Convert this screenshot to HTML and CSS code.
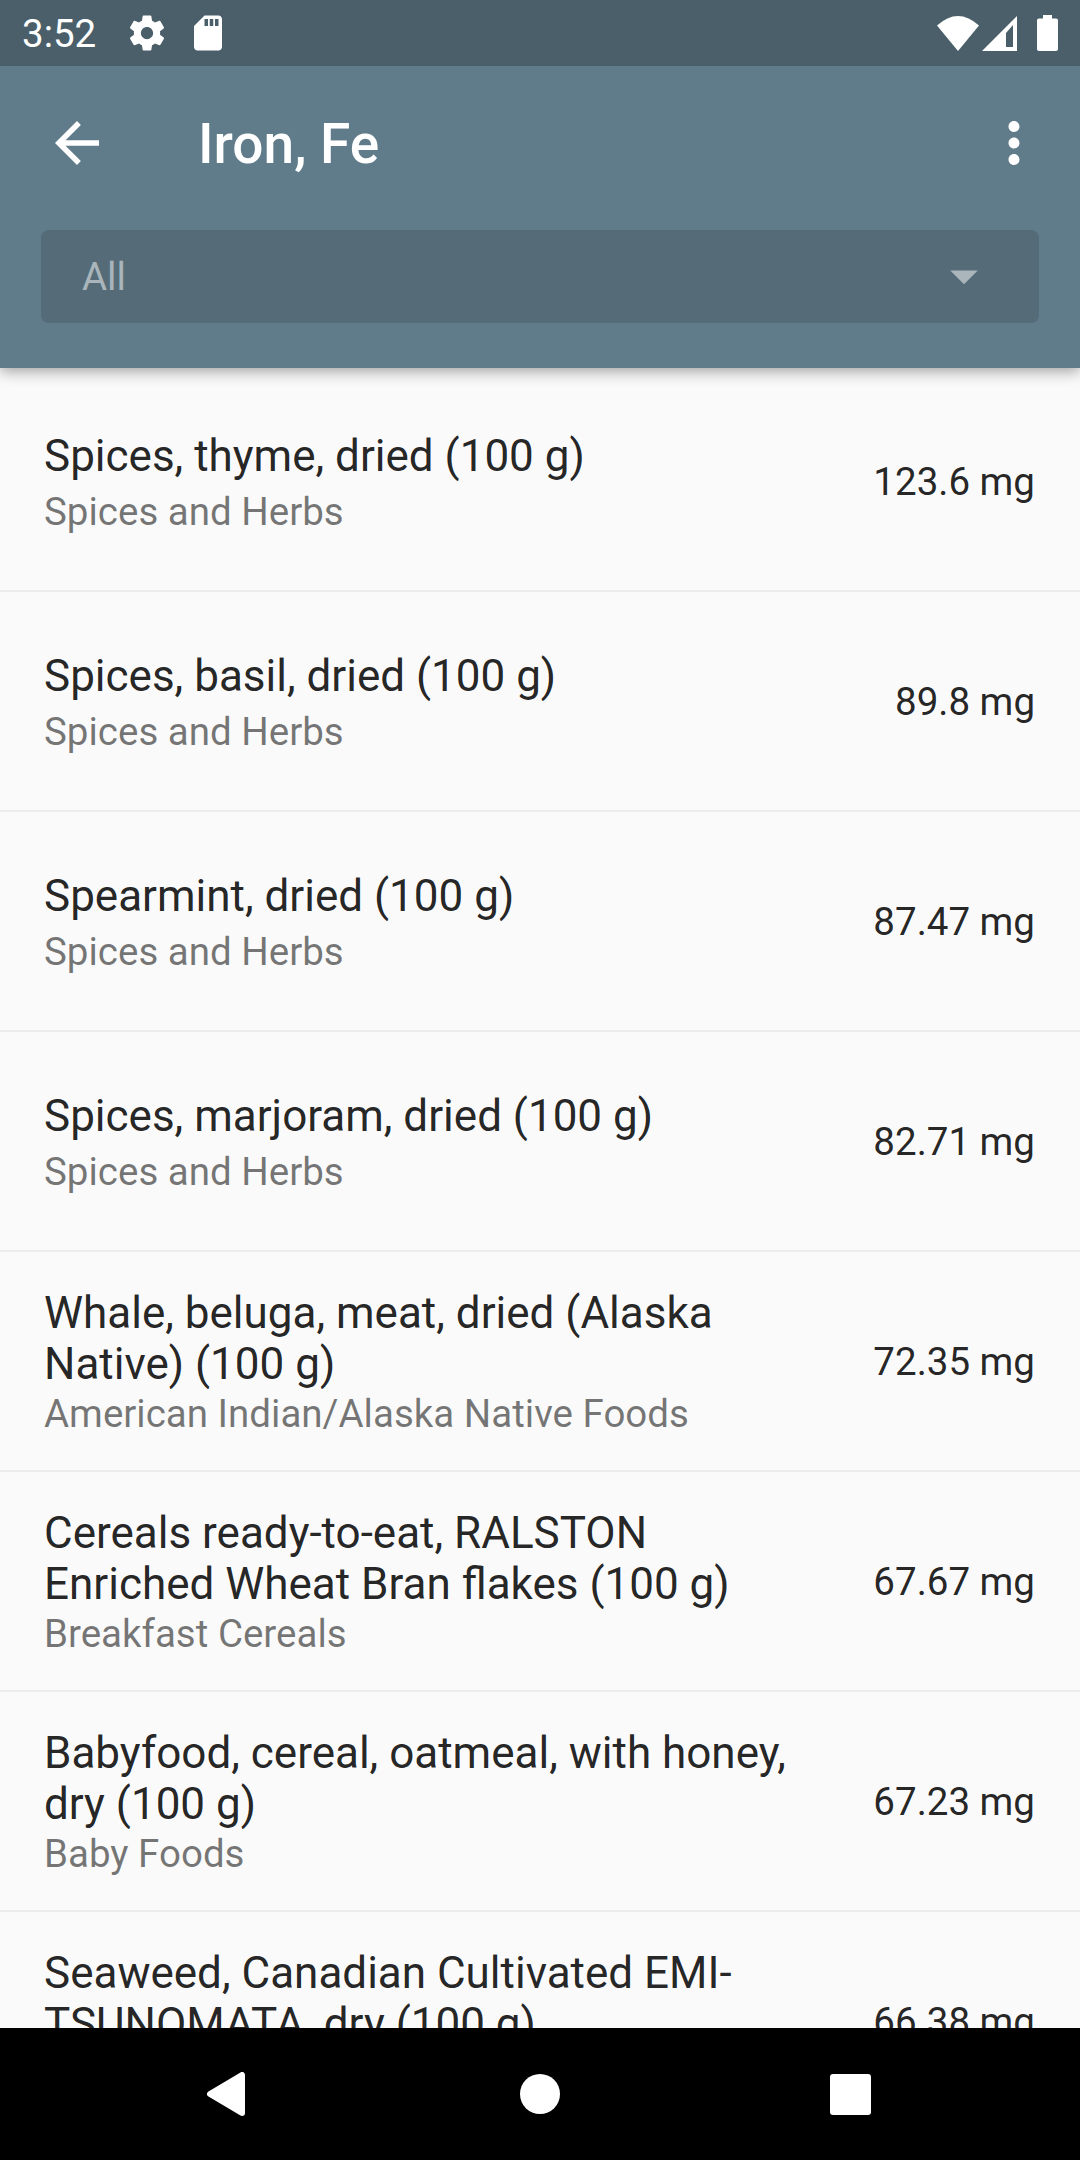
FILE: index.html
```html
<!DOCTYPE html>
<html lang="en">
<head>
<meta charset="utf-8">
<title>Iron, Fe</title>
<link rel="stylesheet" href="styles.css">
</head>
<body>
<div class="screen">
  <header class="appbar">
    <div class="statusbar">
      <span class="clock">3:52</span>
      <svg class="st-gear" viewBox="0 0 24 24"><path d="M19.43 12.98c.04-.32.07-.64.07-.98s-.03-.66-.07-.98l2.11-1.65c.19-.15.24-.42.12-.64l-2-3.46c-.12-.22-.39-.3-.61-.22l-2.49 1c-.52-.4-1.08-.73-1.69-.98l-.38-2.65C14.46 2.18 14.25 2 14 2h-4c-.25 0-.46.18-.49.42l-.38 2.65c-.61.25-1.17.59-1.69.98l-2.49-1c-.23-.09-.49 0-.61.22l-2 3.46c-.13.22-.07.49.12.64l2.11 1.65c-.04.32-.07.65-.07.98s.03.66.07.98l-2.11 1.65c-.19.15-.24.42-.12.64l2 3.46c.12.22.39.3.61.22l2.49-1c.52.4 1.08.73 1.69.98l.38 2.65c.03.24.24.42.49.42h4c.25 0 .46-.18.49-.42l.38-2.65c.61-.25 1.17-.59 1.69-.98l2.49 1c.23.09.49 0 .61-.22l2-3.46c.12-.22.07-.49-.12-.64l-2.11-1.65zM12 15.5c-1.93 0-3.5-1.57-3.5-3.5s1.57-3.5 3.5-3.5 3.5 1.57 3.5 3.5-1.57 3.5-3.5 3.5z"/></svg>
      <svg class="st-sd" viewBox="0 0 24 24"><path d="M18 2h-8L4.02 8 4 20c0 1.1.9 2 2 2h12c1.1 0 2-.9 2-2V4c0-1.100-.9-2-2-2zm-6 6h-2V4h2v4zm3 0h-2V4h2v4zm3 0h-2V4h2v4z"/></svg>
      <span class="spacer"></span>
      <svg class="st-wifi" viewBox="0 0 42 35"><path d="M21 35L0 9.500Q21-9.500 42 9.500Z"/></svg>
      <svg class="st-signal" viewBox="0 0 35 35"><path fill-rule="evenodd" d="M0 35L35 0V35ZM24 31H31V9L24 17Z"/></svg>
      <svg class="st-battery" viewBox="0 0 21 36"><path d="M6 0H15V3.500H19C20.200 3.500 21 4.300 21 5.500V34C21 35.200 20.200 36 19 36H2C.8 36 0 35.200 0 34V5.500C0 4.300 .8 3.500 2 3.500H6Z"/></svg>
    </div>
    <div class="toolbar">
      <svg class="tb-icon" viewBox="0 0 24 24"><path d="M20 11H7.830l5.590-5.590L12 4l-8 8 8 8 1.410-1.410L7.830 13H20v-2z"/></svg>
      <h1 class="tb-title">Iron, Fe</h1>
      <svg class="tb-icon" viewBox="0 0 24 24"><path d="M12 8c1.100 0 2-.9 2-2s-.9-2-2-2-2 .9-2 2 .9 2 2 2zm0 2c-1.100 0-2 .9-2 2s.9 2 2 2 2-.9 2-2-.9-2-2-2zm0 6c-1.100 0-2 .9-2 2s.9 2 2 2 2-.9 2-2-.9-2-2-2z"/></svg>
    </div>
    <div class="filter">
      <span class="filter-label">All</span>
      <svg class="filter-arrow" viewBox="0 0 24 24"><path d="M7 10l5 5 5-5z"/></svg>
    </div>
  </header>

  <main class="list">
    <div class="row"><div class="info"><div class="name">Spices, thyme, dried (100 g)</div><div class="group">Spices and Herbs</div></div><div class="amount">123.6 mg</div></div>
    <div class="row"><div class="info"><div class="name">Spices, basil, dried (100 g)</div><div class="group">Spices and Herbs</div></div><div class="amount">89.8 mg</div></div>
    <div class="row"><div class="info"><div class="name">Spearmint, dried (100 g)</div><div class="group">Spices and Herbs</div></div><div class="amount">87.47 mg</div></div>
    <div class="row"><div class="info"><div class="name">Spices, marjoram, dried (100 g)</div><div class="group">Spices and Herbs</div></div><div class="amount">82.71 mg</div></div>
    <div class="row"><div class="info"><div class="name">Whale, beluga, meat, dried (Alaska Native) (100 g)</div><div class="group">American Indian/Alaska Native Foods</div></div><div class="amount">72.35 mg</div></div>
    <div class="row"><div class="info"><div class="name">Cereals ready-to-eat, RALSTON Enriched Wheat Bran flakes (100 g)</div><div class="group">Breakfast Cereals</div></div><div class="amount">67.67 mg</div></div>
    <div class="row"><div class="info"><div class="name">Babyfood, cereal, oatmeal, with honey, dry (100 g)</div><div class="group">Baby Foods</div></div><div class="amount">67.23 mg</div></div>
    <div class="row"><div class="info"><div class="name">Seaweed, Canadian Cultivated EMI-TSUNOMATA, dry (100 g)</div><div class="group">Vegetables and Vegetable Products</div></div><div class="amount">66.38 mg</div></div>
  </main>

  <nav class="navbar">
    <svg class="nav-back" viewBox="0 0 38 44"><path d="M35 3V41L3 22Z"/></svg>
    <span class="nav-home"></span>
    <span class="nav-recent"></span>
  </nav>
</div>
</body>
</html>
```
FILE: styles.css
```css
* { box-sizing: border-box; }
html, body { margin: 0; padding: 0; }
body { font-family: Roboto, "Noto Sans", sans-serif; background: #fafafa; }

.screen { width: 1080px; height: 2160px; display: flex; flex-direction: column; overflow: hidden; }

.appbar { flex: none; position: relative; z-index: 2; background: #607b89; box-shadow: 0 3px 14px rgba(0,0,0,.38); padding-bottom: 45px; }

.statusbar { height: 66px; background: #4a5f6a; display: flex; align-items: center; padding: 0 22px; color: #fff; }
.statusbar svg { fill: #fff; flex: none; display: block; }
.clock { font-size: 38.5px; width: 103.500px; }
.st-gear { width: 42px; height: 42px; }
.st-sd { width: 42px; height: 42px; margin-left: 19px; }
.spacer { flex: 1; }
.st-wifi { width: 42px; height: 35px; }
.st-signal { width: 35px; height: 35px; margin-left: 3px; }
.st-battery { width: 21px; height: 36px; margin-left: 20px; }

.toolbar { height: 154px; margin-bottom: 9.500px; display: flex; align-items: center; padding: 0 33px 0 44px; color: #fff; }
.tb-icon { width: 66px; height: 66px; fill: #fff; flex: none; }
.tb-title { margin: 2px 0 0 88px; flex: 1; font-size: 55px; font-weight: 500; }

.filter { margin: 0 41px; height: 93.500px; background: #556c78; border-radius: 8px; display: flex; align-items: center; justify-content: space-between; padding: 0 42px 0 41px; }
.filter-label { font-size: 38.5px; color: rgba(255,255,255,.5); }
.filter-arrow { width: 66px; height: 66px; fill: rgba(255,255,255,.5); }

.list { flex: 1; min-height: 0; overflow: hidden; padding-top: 4px; background: #fafafa; }
.row { height: 220px; flex: none; display: flex; align-items: center; gap: 66px; padding: 0 45px 0 44px; border-bottom: 2px solid #ececec; }
.info { flex: 1; min-width: 0; padding-top: 3px; }
.name { font-size: 44px; line-height: 51px; min-height: 57px; color: rgba(0,0,0,.87); }
.group { font-size: 38.5px; line-height: 47px; color: rgba(0,0,0,.54); }
.amount { flex: none; font-size: 38.5px; color: rgba(0,0,0,.87); }

.navbar { flex: none; height: 132px; background: #000; position: relative; z-index: 3; display: flex; align-items: center; justify-content: center; gap: 270px; padding-right: 2px; }
.nav-back { width: 38px; height: 44px; margin-right: 5px; fill: #fff; stroke: #fff; stroke-width: 6px; stroke-linejoin: round; }
.nav-home { width: 40px; height: 40px; border-radius: 50%; background: #fff; }
.nav-recent { width: 41px; height: 41px; border-radius: 3px; background: #fff; }
```
